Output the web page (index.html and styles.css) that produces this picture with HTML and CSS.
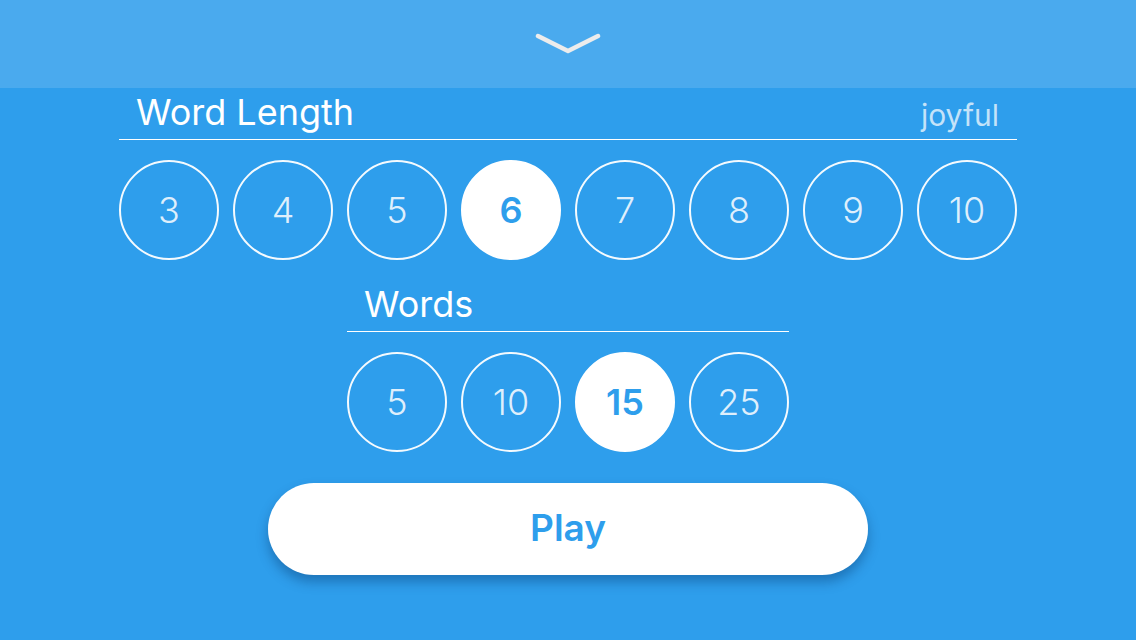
FILE: index.html
```html
<!DOCTYPE html>
<html>
<head>
<meta charset="utf-8">
<link rel="stylesheet" href="styles.css">
</head>
<body>
<div class="app">
  <header class="topbar">
    <svg class="chevron" width="66" height="24" viewBox="0 0 66 24">
      <polyline points="3,4 33,19 63,4" fill="none" stroke="#ececec" stroke-width="4.5" stroke-linecap="round" stroke-linejoin="round"/>
    </svg>
  </header>
  <main class="content">
    <section class="group wide">
      <div class="title-row">
        <span class="title">Word Length</span>
        <span class="sample">joyful</span>
      </div>
      <div class="choices">
        <div class="choice">3</div>
        <div class="choice">4</div>
        <div class="choice">5</div>
        <div class="choice selected">6</div>
        <div class="choice">7</div>
        <div class="choice">8</div>
        <div class="choice">9</div>
        <div class="choice">10</div>
      </div>
    </section>
    <section class="group narrow">
      <div class="title-row">
        <span class="title">Words</span>
      </div>
      <div class="choices">
        <div class="choice">5</div>
        <div class="choice">10</div>
        <div class="choice selected">15</div>
        <div class="choice">25</div>
      </div>
    </section>
    <button class="play">Play</button>
  </main>
</div>
</body>
</html>
```

FILE: styles.css
```css
html, body {
  margin: 0;
  padding: 0;
}
body {
  width: 1136px;
  height: 640px;
  overflow: hidden;
  background: #2e9eec;
  font-family: Inter, "Noto Sans", sans-serif;
  color: #fff;
}
.app {
  display: flex;
  flex-direction: column;
  height: 640px;
}
.topbar {
  height: 88px;
  background: #4aaaee;
  display: flex;
  justify-content: center;
  padding-top: 32px;
  box-sizing: border-box;
}
.chevron {
  display: block;
}
.content {
  display: flex;
  flex-direction: column;
  align-items: center;
}
.group {
  display: flex;
  flex-direction: column;
}
.wide { width: 898px; }
.narrow { width: 442px; margin-top: 20px; }
.title-row {
  display: flex;
  justify-content: space-between;
  align-items: baseline;
  padding: 4px 18px 5px 17px;
  height: 42px;
  border-bottom: 1px solid #ffffff;
}
.title {
  font-size: 36px;
  line-height: 41px;
  font-weight: 400;
  letter-spacing: 0;
}
.sample {
  font-size: 30px;
  line-height: 42px;
  color: rgba(255, 255, 255, 0.72);
  font-weight: 400;
  position: relative;
  top: 1px;
}
.choices {
  display: flex;
  gap: 14px;
  margin-top: 20px;
}
.choice {
  width: 100px;
  height: 100px;
  box-sizing: border-box;
  border: 2px solid rgba(255, 255, 255, 0.95);
  border-radius: 50%;
  display: flex;
  align-items: center;
  justify-content: center;
  font-size: 36px;
  font-weight: 300;
  color: rgba(255, 255, 255, 0.85);
}
.choice.selected {
  background: #ffffff;
  border-color: #ffffff;
  color: #2e9eec;
  font-weight: 600;
}
.play {
  margin-top: 31px;
  width: 600px;
  height: 92px;
  border: none;
  border-radius: 46px;
  background: #ffffff;
  color: #2e9eec;
  font-family: Inter, "Noto Sans", sans-serif;
  font-size: 37px;
  font-weight: 600;
  box-shadow: 0 7px 12px rgba(0, 40, 90, 0.35);
  padding: 0 0 4px 0;
}
```
